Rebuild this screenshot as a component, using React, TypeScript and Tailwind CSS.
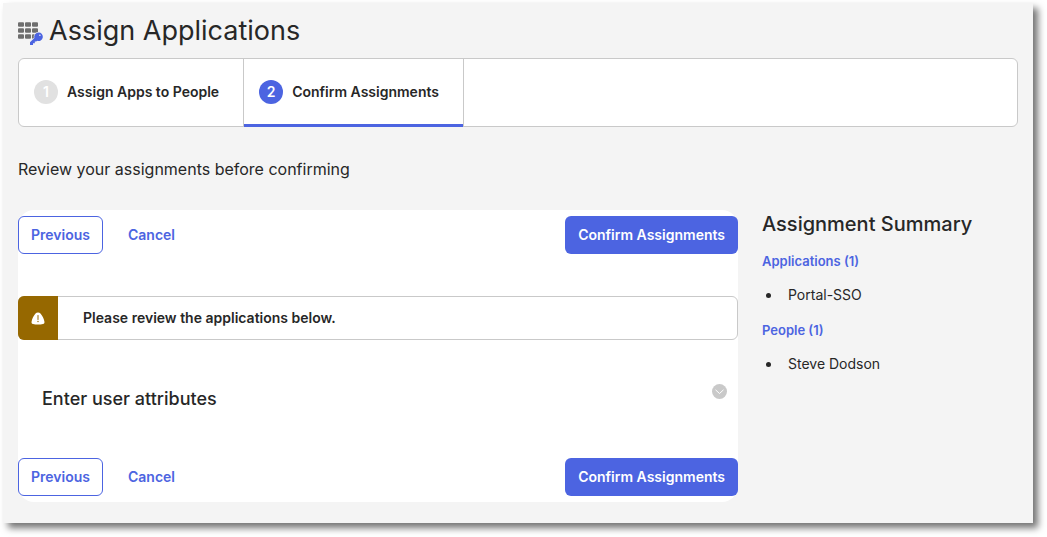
import React from 'react';

const steps = [
  { number: 1, label: 'Assign Apps to People', active: false },
  { number: 2, label: 'Confirm Assignments', active: true },
];

const summary = [
  { title: 'Applications (1)', items: ['Portal-SSO'] },
  { title: 'People (1)', items: ['Steve Dodson'] },
];

function AppsKeyIcon() {
  return (
    <svg className="w-[26px] h-6 mt-[6px] shrink-0" viewBox="0 0 26 24" aria-hidden="true">
      <g fill="#6e6e6e">
        {[0, 6, 12].map((y) =>
          [0, 7, 14].map((x) => <rect key={`${x}-${y}`} x={x} y={y + 0.3} width="6" height="4.4" rx="1" />)
        )}
      </g>
      {/* Halo keeps the key apart from the tiles */}
      <path
        d="M20.600 10.600a4.300 4.300 0 0 0-4.200 5.500L12 20.200V23h3v-1.700h1.800v-1.900h1.500l.8-.7A4.200 4.200 0 1 0 20.600 10.600Z"
        fill="#4c64e1"
        stroke="#f4f4f4"
        strokeWidth="1.2"
        paintOrder="stroke"
      />
      <circle cx="21.900" cy="13.300" r=".8" fill="#f4f4f4" />
    </svg>
  );
}

function WarningIcon() {
  return (
    <svg className="w-[14px] h-[13px]" viewBox="0 0 14 13" aria-hidden="true">
      <path
        d="M7 .4c-1 0-1.900.5-2.700 1.400C2.600 3.800 1.200 6.600.6 9.400.3 10.800.8 11.600 2 11.900c3.300.8 6.700.8 10 0 1.200-.3 1.700-1.100 1.400-2.500-.6-2.800-2-5.600-3.700-7.600C8.900.9 8 .4 7 .4Z"
        fill="#fff"
      />
      <path d="M7 3.500v4" stroke="#966800" strokeWidth="1" strokeLinecap="round" />
      <circle cx="7" cy="9.500" r=".7" fill="#966800" />
    </svg>
  );
}

function ActionBar() {
  return (
    <div className="flex items-center">
      <button type="button" className="h-[38px] px-3 border border-[#4c64e1] rounded-md bg-white text-sm font-semibold text-[#4c64e1]">
        Previous
      </button>
      <button type="button" className="h-[38px] ml-3 px-[13px] text-sm font-semibold text-[#4c64e1]">
        Cancel
      </button>
      <button type="button" className="h-[38px] ml-auto px-[13px] rounded-md bg-[#4c64e1] text-sm font-semibold text-white">
        Confirm Assignments
      </button>
    </div>
  );
}

export default function App() {
  return (
    <div className="min-h-screen bg-white pt-[3px] pl-[3px] pr-[14px] pb-[14px] font-['Inter',sans-serif] text-[#272727]">
      <div className="bg-[#f4f4f4] px-[15px] pt-2 pb-[21px] shadow-[5px_5px_7px_rgba(0,0,0,0.55)]">
        <header className="flex items-center gap-[5px] h-10 mb-[7px]">
          <AppsKeyIcon />
          <h1 className="text-[27px] leading-10">Assign Applications</h1>
        </header>

        <ol className="flex h-[69px] bg-white border border-[#c9c9c9] rounded-md">
          {steps.map((step) => (
            <li
              key={step.number}
              aria-current={step.active ? 'step' : undefined}
              className="relative flex items-center gap-[9px] pl-[15px] pr-6 pb-px border-r border-[#c9c9c9] text-sm font-semibold"
            >
              <span
                className={`flex items-center justify-center w-6 h-6 rounded-full text-white ${
                  step.active ? 'bg-[#4c64e1]' : 'bg-[#e1e1e1]'
                }`}
              >
                {step.number}
              </span>
              {step.label}
              {step.active && <span className="absolute left-0 right-0 -bottom-px h-[3px] bg-[#4c64e1]" />}
            </li>
          ))}
        </ol>

        <p className="mt-[30px] mb-[29px] text-base leading-6">Review your assignments before confirming</p>

        <div className="flex items-start gap-6">
          <main className="flex-1 py-[6px] bg-white rounded-2xl">
            <ActionBar />

            <div role="alert" className="flex h-11 mt-[42px] border border-[#c9c9c9] rounded-md">
              <div className="flex items-center justify-center w-10 -my-px -ml-px rounded-l-md bg-[#966800]">
                <WarningIcon />
              </div>
              <p className="self-center pl-[25px] text-sm font-semibold">Please review the applications below.</p>
            </div>

            <section className="flex items-start justify-between pt-11 pb-11 pl-6 pr-[11px]">
              <h2 className="text-lg leading-[30px] font-medium">Enter user attributes</h2>
              <button type="button" aria-label="Expand user attributes">
                <svg className="w-[15px] h-[15px]" viewBox="0 0 15 15" aria-hidden="true">
                  <circle cx="7.5" cy="7.5" r="7.5" fill="#c9c9c9" />
                  <path d="M3.500 5.800l4 3.700 4-3.700" fill="none" stroke="#fff" strokeWidth="1" />
                </svg>
              </button>
            </section>

            <ActionBar />
          </main>

          <aside className="w-64 shrink-0">
            <h2 className="mb-[13px] text-xl leading-7 font-medium">Assignment Summary</h2>
            <div className="flex flex-col gap-[15px]">
              {summary.map((group) => (
                <section key={group.title}>
                  <h3 className="text-[13px] leading-5 font-semibold text-[#4c64e1]">{group.title}</h3>
                  <ul className="mt-[14px] text-sm leading-5">
                    {group.items.map((item) => (
                      <li key={item} className="flex items-center gap-[17px] pl-1">
                        <span className="w-[5px] h-[5px] rounded-full bg-[#272727]" />
                        {item}
                      </li>
                    ))}
                  </ul>
                </section>
              ))}
            </div>
          </aside>
        </div>
      </div>
    </div>
  );
}
